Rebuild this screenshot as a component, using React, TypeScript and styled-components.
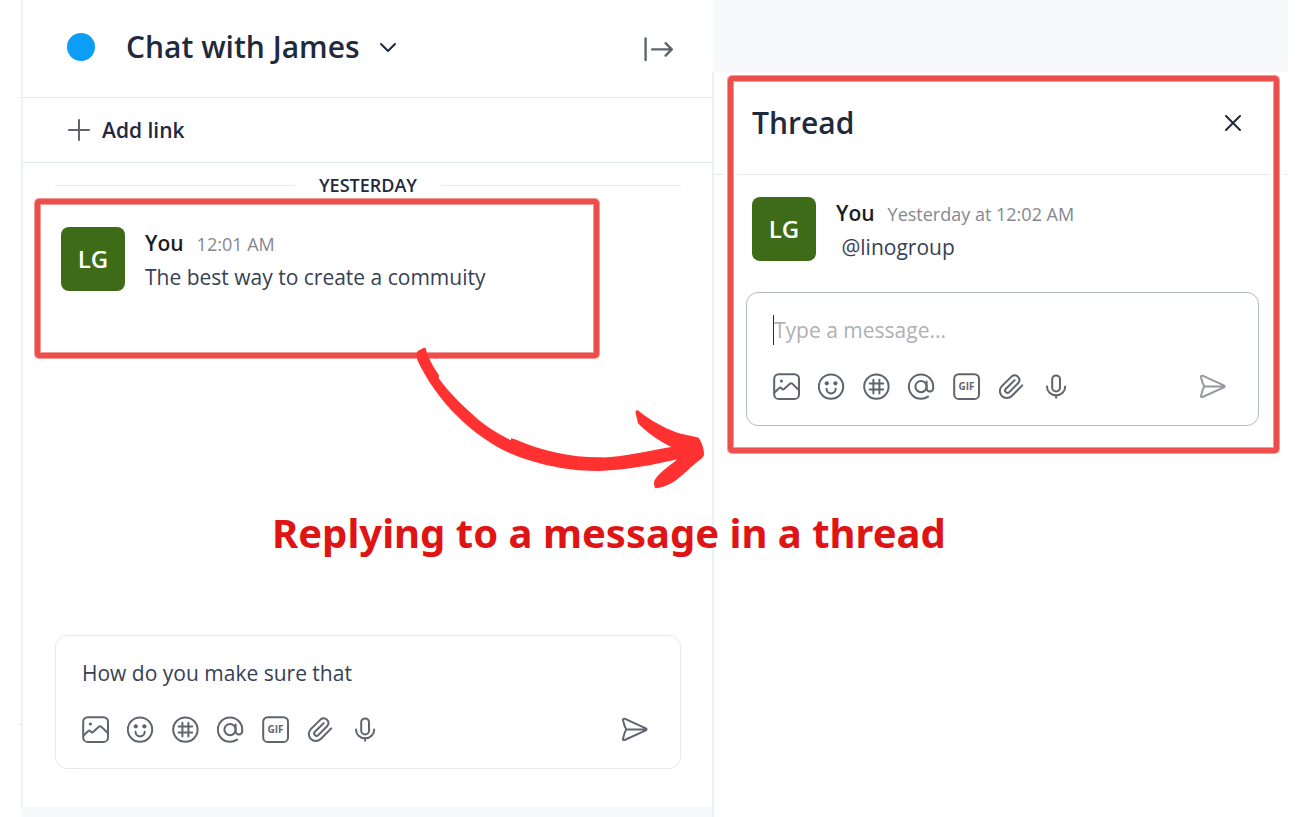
import React from "react";
import styled, { createGlobalStyle } from "styled-components";

const ink = "#1f2a3c";
const grey = "#5f646d";
const line = "#e7eaef";
const rule = "#eff0f4";
const band = "#f8f9fb";
const markRed = "#ec4e4b";
const markEdge = "#f39a98";

const GlobalStyle = createGlobalStyle`
  *, *::before, *::after { box-sizing: border-box; }
  body { margin: 0; background: #fff; color: ${ink}; font-family: "Open Sans", "Noto Sans", sans-serif; }
  button, input { font: inherit; color: inherit; }
  h1, h2, p { margin: 0; }
`;

const Page = styled.div`
  position: relative;
  display: grid;
  grid-template-columns: 3px minmax(0, 691fr) minmax(0, 576fr);
  min-height: 100vh;
  padding: 0 18px;
`;

const Rail = styled.div`
  display: flex;
  flex-direction: column;
  padding-bottom: 92px;
`;

const RailCell = styled.div<{ $grow?: boolean }>`
  height: 98px;
  flex: ${(p) => (p.$grow ? "1" : "none")};
  border-bottom: 1px solid ${line};
`;

const ChatColumn = styled.main`
  display: flex;
  flex-direction: column;
`;

const ChatPanel = styled.section`
  display: flex;
  flex-direction: column;
  flex: 1;
  border-left: 2px solid ${rule};
`;

const ChatHeader = styled.header`
  display: flex;
  align-items: center;
  height: 98px;
  padding: 0 38px 4px 44px;
  border-bottom: 1px solid ${line};
`;

const Dot = styled.span`
  width: 28px;
  height: 28px;
  margin-right: 31px;
  border-radius: 50%;
  background: #0c9df6;
`;

const Title = styled.h1`
  font-size: 30px;
  line-height: 40px;
  font-weight: 600;
  white-space: nowrap;
`;

const PlainButton = styled.button`
  display: inline-flex;
  align-items: center;
  justify-content: center;
  padding: 0;
  border: 0;
  background: none;
  cursor: pointer;
  svg { display: block; }
`;

const TitleMenu = styled(PlainButton)`
  margin: 0 auto 0 16px;
`;

const CollapseButton = styled(PlainButton)`
  margin-top: 4px;
`;

const LinkBar = styled.div`
  display: flex;
  align-items: center;
  height: 65px;
  padding: 0 44px;
  border-bottom: 1px solid #dfe5ec;
`;

const AddLink = styled(PlainButton)`
  gap: 11px;
  font-size: 21px;
  line-height: 30px;
  font-weight: 600;
`;

const Messages = styled.div`
  flex: 1;
`;

const DateRow = styled.div`
  display: flex;
  align-items: center;
  gap: 24px;
  padding: 9px 31px 0 32px;
  font-size: 18px;
  line-height: 26px;
  font-weight: 600;
  &::before, &::after { content: ""; flex: 1; height: 1px; background: ${line}; }
`;

const MarkedMessage = styled.div`
  min-height: 159px;
  margin: 1px 113px 0 12px;
  padding: 23px 21px;
  border: 5px solid ${markRed};
  border-radius: 4px;
  box-shadow: 0 0 0 1px ${markEdge}, inset 0 0 0 1px ${markEdge};
`;

const MessageRow = styled.article`
  display: flex;
  gap: 20px;
`;

const Avatar = styled.div`
  display: flex;
  align-items: center;
  justify-content: center;
  width: 64px;
  height: 64px;
  flex: none;
  border-radius: 8px;
  background: #3d6b17;
  color: #fff;
  font-size: 24px;
  line-height: 32px;
  font-weight: 600;
`;

const MessageText = styled.div`
  font-size: 21px;
  line-height: 33px;
  white-space: nowrap;
`;

const Meta = styled.div`
  display: flex;
  align-items: baseline;
  gap: 13px;
`;

const Author = styled.span`
  color: #1b1d22;
  font-weight: 600;
`;

const Time = styled.time`
  color: #85888e;
  font-size: 18px;
`;

const Body = styled.p`
  color: #364155;
  white-space: pre;
`;

const Composer = styled.form<{ $active?: boolean }>`
  display: flex;
  flex-direction: column;
  gap: 28px;
  padding: 22px 31px 24px 26px;
  border: 1px solid ${(p) => (p.$active ? "#b5bac3" : "#e4e8ed")};
  border-radius: 12px;
  background: #fff;
`;

const ChatComposerArea = styled.div`
  padding: 0 31px 38px 32px;
`;

const Field = styled.div`
  display: flex;
  height: 30px;
`;

const Caret = styled.span`
  width: 1px;
  background: #222b3a;
`;

const Input = styled.input`
  flex: 1;
  min-width: 0;
  padding: 0;
  border: 0;
  outline: 0;
  background: none;
  font-size: 21px;
  line-height: 30px;
  color: #364155;
  &::placeholder { color: #aeb0b5; opacity: 1; }
`;

const Tools = styled.div`
  display: flex;
  gap: 17px;
  height: 28px;
  color: ${grey};
`;

const SendButton = styled(PlainButton)<{ $dim?: boolean }>`
  margin-left: auto;
  color: ${(p) => (p.$dim ? "#96989c" : grey)};
`;

const FooterBand = styled.div`
  height: 10px;
  background: ${band};
`;

const ThreadColumn = styled.aside`
  display: flex;
  flex-direction: column;
`;

const TopBand = styled.div`
  height: 72px;
  margin-left: 1px;
  background: ${band};
`;

const ThreadPanel = styled.section`
  flex: 1;
  border-left: 2px solid ${rule};
`;

const ThreadContent = styled.div`
  position: relative;
  padding-bottom: 31px;
`;

const ThreadHeader = styled.header`
  display: flex;
  align-items: center;
  justify-content: space-between;
  height: 103px;
  padding: 0 45px 0 38px;
  border-bottom: 1px solid ${line};
`;

const ThreadMessages = styled.div`
  padding: 22px 38px 28px;
`;

const ThreadComposerArea = styled.div`
  padding: 0 29px 0 32px;
`;

const ThreadMark = styled.div`
  position: absolute;
  inset: 4px 9px 4px 14px;
  border: 5px solid ${markRed};
  border-radius: 4px;
  box-shadow: 0 0 0 1px ${markEdge}, inset 0 0 0 1px ${markEdge},
    0 0 0 4px #fff, inset 0 0 0 4px #fff;
  pointer-events: none;
`;

const ArrowMark = styled.svg`
  position: absolute;
  left: 400px;
  top: 330px;
  pointer-events: none;
`;

const Caption = styled.p`
  position: absolute;
  left: 272px;
  top: 504px;
  color: #df1414;
  font-family: "Noto Sans", "Open Sans", sans-serif;
  font-size: 40px;
  line-height: 58px;
  font-weight: 700;
  white-space: nowrap;
`;

function Icon({ children, size = 28 }: { children: React.ReactNode; size?: number }) {
  return (
    <svg
      width={size}
      height={size}
      viewBox={`0 0 ${size} ${size}`}
      fill="none"
      stroke="currentColor"
      strokeWidth="2"
      strokeLinecap="round"
      strokeLinejoin="round"
      aria-hidden="true"
    >
      {children}
    </svg>
  );
}

const tools: { label: string; art: React.ReactNode }[] = [
  {
    label: "Add image",
    art: (
      <>
        <rect x="1.2" y="1.2" width="24.8" height="24.8" rx="4.6" />
        <circle cx="8.4" cy="8" r="1.6" fill="currentColor" stroke="none" />
        <path d="M1.5 19.4 L6.6 14.8 Q7.4 14.2 8.2 15 L9.4 16.2 Q10.2 16.9 11 16.1 L17.2 10.5 Q18.2 9.8 19.2 10.6 L25.8 17" />
      </>
    ),
  },
  {
    label: "Add emoji",
    art: (
      <>
        <circle cx="13" cy="13.6" r="12.2" />
        <circle cx="8.8" cy="10.3" r="2.1" fill="currentColor" stroke="none" />
        <circle cx="17.4" cy="10.3" r="2.1" fill="currentColor" stroke="none" />
        <path d="M8.5 15.8a4.6 4.6 0 0 0 9.2 0" />
      </>
    ),
  },
  {
    label: "Add topic",
    art: (
      <>
        <circle cx="13.4" cy="13.6" r="12.2" />
        <path d="M10.4 6.8v13.6M16.4 6.8v13.6M6.6 10.6h13.6M6.6 16.6h13.6" />
      </>
    ),
  },
  {
    label: "Mention",
    art: (
      <>
        <circle cx="13" cy="13.6" r="5.6" />
        <path d="M18.6 8.4v6.8a3.3 3.3 0 0 0 6.6 0v-1.6a12.2 12.2 0 1 0-12.2 12.2c2.6 0 5-.8 7-2.2" />
      </>
    ),
  },
  {
    label: "Add GIF",
    art: (
      <>
        <rect x="1.2" y="1.2" width="24.8" height="24.8" rx="4.6" />
        <text
          x="13.6"
          y="17"
          textAnchor="middle"
          fontSize="10"
          fontWeight="700"
          fill="currentColor"
          stroke="none"
        >
          GIF
        </text>
      </>
    ),
  },
  {
    label: "Attach file",
    art: (
      <path d="M24.3 12.4 13.75 23.05A7 7 0 0 1 3.85 13.15L13.7 3.4A4.7 4.7 0 0 1 20.3 10L11.3 19.1A2.4 2.4 0 0 1 7.9 15.7L16.7 7.1" />
    ),
  },
  {
    label: "Record voice",
    art: (
      <>
        <rect x="9.2" y="2.4" width="7.8" height="16" rx="3.9" />
        <path d="M4 13.4c0 5.2 3.8 8.8 9.1 8.8s9.1-3.6 9.1-8.8M13.1 22.2v2.6" />
      </>
    ),
  },
];

function Toolbar({ dimSend }: { dimSend?: boolean }) {
  return (
    <Tools>
      {tools.map((t) => (
        <PlainButton key={t.label} type="button" aria-label={t.label}>
          <Icon>{t.art}</Icon>
        </PlainButton>
      ))}
      <SendButton type="submit" aria-label="Send" $dim={dimSend}>
        <Icon>
          <path d="M3.6 2.7 24.8 12.4Q26.4 13.4 24.8 14.4L3.6 24Q1.7 24.5 2 22.6Q3.2 17.3 5.2 13.4Q3.2 9.6 2 4.2Q1.7 2.3 3.6 2.7ZM5.2 13.4H24.8" />
        </Icon>
      </SendButton>
    </Tools>
  );
}

function Message({ time, text }: { time: string; text: string }) {
  return (
    <MessageRow>
      <Avatar>LG</Avatar>
      <MessageText>
        <Meta>
          <Author>You</Author>
          <Time>{time}</Time>
        </Meta>
        <Body>{text}</Body>
      </MessageText>
    </MessageRow>
  );
}

const stop = (e: React.FormEvent) => e.preventDefault();

export default function App() {
  return (
    <>
      <GlobalStyle />
      <Page>
        <Rail>
          <RailCell />
          <RailCell $grow />
        </Rail>

        <ChatColumn>
          <ChatPanel>
            <ChatHeader>
              <Dot />
              <Title>Chat with James</Title>
              <TitleMenu type="button" aria-label="Chat menu">
                <Icon size={24}>
                  <path d="M5 9l7 7 7-7" />
                </Icon>
              </TitleMenu>
              <CollapseButton type="button" aria-label="Collapse panel">
                <svg width="32" height="28" viewBox="0 0 32 28" fill="none" stroke={grey} strokeWidth="2.4" strokeLinecap="round" strokeLinejoin="round" aria-hidden="true">
                  <path d="M3.6 3.4v21.6M10.2 14.4h19.2M23.6 8.2l6.2 6.2-6.2 6.2" />
                </svg>
              </CollapseButton>
            </ChatHeader>
            <LinkBar>
              <AddLink type="button">
                <svg width="24" height="24" viewBox="0 0 24 24" stroke={grey} strokeWidth="2" strokeLinecap="round" aria-hidden="true">
                  <path d="M12 2v20M2 12h20" />
                </svg>
                Add link
              </AddLink>
            </LinkBar>
            <Messages>
              <DateRow>YESTERDAY</DateRow>
              <MarkedMessage>
                <Message time="12:01 AM" text="The best way to create a commuity" />
              </MarkedMessage>
            </Messages>
            <ChatComposerArea>
              <Composer onSubmit={stop}>
                <Field>
                  <Input aria-label="Message" defaultValue="How do you make sure that" />
                </Field>
                <Toolbar />
              </Composer>
            </ChatComposerArea>
          </ChatPanel>
          <FooterBand />
        </ChatColumn>

        <ThreadColumn>
          <TopBand />
          <ThreadPanel>
            <ThreadContent>
              <ThreadHeader>
                <Title as="h2">Thread</Title>
                <PlainButton type="button" aria-label="Close thread">
                  <Icon size={20}>
                    <path d="M3 3l14 14M17 3L3 17" />
                  </Icon>
                </PlainButton>
              </ThreadHeader>
              <ThreadMessages>
                <Message time="Yesterday at 12:02 AM" text=" @linogroup" />
              </ThreadMessages>
              <ThreadComposerArea>
                <Composer $active onSubmit={stop}>
                  <Field>
                    <Caret />
                    <Input aria-label="Reply" placeholder="Type a message..." />
                  </Field>
                  <Toolbar dimSend />
                </Composer>
              </ThreadComposerArea>
              <ThreadMark />
            </ThreadContent>
          </ThreadPanel>
        </ThreadColumn>

        <ArrowMark width="330" height="180" viewBox="0 0 990 540" fill="#ff3131" aria-hidden="true">
          <path d="M50 68L54 62L72 53L77 54C82 78 96 105 117 136L116 145C145 185 175 215 214 250C250 285 290 310 333 331L333 325L345 328C430 365 520 383 600 382C660 384 740 363 814 351C775 333 735 303 714 280L706 245Q708 239 714 241C750 272 810 305 850 313L888 321Q897 321 902 334C910 350 912 362 912 376Q908 384 900 389C870 412 855 430 825 453C800 468 785 473 766 475Q760 465 763 452C775 430 800 415 832 388C760 405 680 420 600 423C500 425 400 400 330 370C220 320 110 215 52 90Z" />
        </ArrowMark>
        <Caption>Replying to a message in a thread</Caption>
      </Page>
    </>
  );
}
